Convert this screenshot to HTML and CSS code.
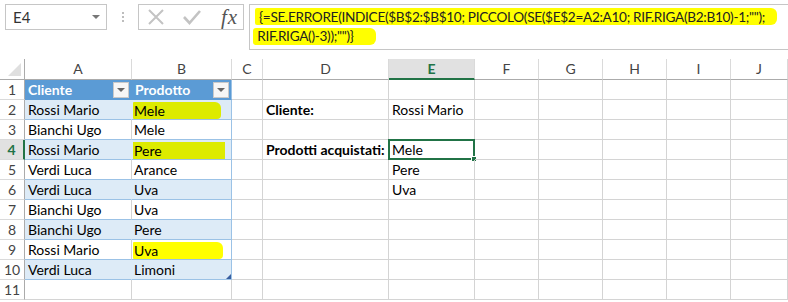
FILE: index.html
```html
<!DOCTYPE html>
<html lang="it">
<head>
<meta charset="utf-8">
<title>Excel</title>
<link rel="stylesheet" href="styles.css">
</head>
<body>
<div class="bar">
  <div class="namebox"><span class="nb-text">E4</span><span class="nb-arrow"></span></div>
  <div class="dots"><i></i><i></i><i></i></div>
  <div class="btns">
    <svg class="ico" width="18" height="18" viewBox="0 0 18 18"><path d="M2 2 L16 16 M16 2 L2 16" stroke="#c3c3c3" stroke-width="2" fill="none"/></svg>
    <svg class="ico" width="18" height="18" viewBox="0 0 18 18"><path d="M1 9 L6.5 15 L17 3" stroke="#c3c3c3" stroke-width="2.6" fill="none"/></svg>
    <span class="fx">fx</span>
  </div>
  <div class="formula">
    <div class="fl1"><span class="hl hl1">{=SE.ERRORE(INDICE($B$2:$B$10; PICCOLO(SE($E$2=A2:A10; RIF.RIGA(B2:B10)-1;"");</span></div>
    <div class="fl2"><span class="hl hl2">&nbsp;RIF.RIGA()-3));"")}</span></div>
  </div>
</div>
<div class="sheet">
  <div class="c corner"><span class="tri"></span></div>
  <div class="c ch">A</div><div class="c ch">B</div><div class="c ch">C</div><div class="c ch">D</div><div class="c ch sel">E</div><div class="c ch">F</div><div class="c ch">G</div><div class="c ch">H</div><div class="c ch">I</div><div class="c ch">J</div>

  <div class="c rh">1</div>
  <div class="c th thA">Cliente<span class="dd"></span></div><div class="c th thB">Prodotto<span class="dd"></span></div>
  <div class="c"></div><div class="c"></div><div class="c"></div><div class="c"></div><div class="c"></div><div class="c"></div><div class="c"></div><div class="c"></div>

  <div class="c rh">2</div>
  <div class="c t band tA">Rossi Mario</div><div class="c t band tB"><span class="mk mkb">Mele</span></div>
  <div class="c"></div><div class="c bold">Cliente:</div><div class="c">Rossi Mario</div><div class="c"></div><div class="c"></div><div class="c"></div><div class="c"></div><div class="c"></div>

  <div class="c rh">3</div>
  <div class="c t tA">Bianchi Ugo</div><div class="c t tB">Mele</div>
  <div class="c"></div><div class="c"></div><div class="c"></div><div class="c"></div><div class="c"></div><div class="c"></div><div class="c"></div><div class="c"></div>

  <div class="c rh rsel">4</div>
  <div class="c t band tA">Rossi Mario</div><div class="c t band tB"><span class="mk mkb mk4">Pere</span></div>
  <div class="c"></div><div class="c bold">Prodotti acquistati:</div><div class="c active">Mele<span class="afr"><span class="handle"></span></span></div><div class="c"></div><div class="c"></div><div class="c"></div><div class="c"></div><div class="c"></div>

  <div class="c rh">5</div>
  <div class="c t tA">Verdi Luca</div><div class="c t tB">Arance</div>
  <div class="c"></div><div class="c"></div><div class="c">Pere</div><div class="c"></div><div class="c"></div><div class="c"></div><div class="c"></div><div class="c"></div>

  <div class="c rh">6</div>
  <div class="c t band tA">Verdi Luca</div><div class="c t band tB">Uva</div>
  <div class="c"></div><div class="c"></div><div class="c">Uva</div><div class="c"></div><div class="c"></div><div class="c"></div><div class="c"></div><div class="c"></div>

  <div class="c rh">7</div>
  <div class="c t tA">Bianchi Ugo</div><div class="c t tB">Uva</div>
  <div class="c"></div><div class="c"></div><div class="c"></div><div class="c"></div><div class="c"></div><div class="c"></div><div class="c"></div><div class="c"></div>

  <div class="c rh">8</div>
  <div class="c t band tA">Bianchi Ugo</div><div class="c t band tB">Pere</div>
  <div class="c"></div><div class="c"></div><div class="c"></div><div class="c"></div><div class="c"></div><div class="c"></div><div class="c"></div><div class="c"></div>

  <div class="c rh">9</div>
  <div class="c t tA">Rossi Mario</div><div class="c t tB"><span class="mk mkw">Uva</span></div>
  <div class="c"></div><div class="c"></div><div class="c"></div><div class="c"></div><div class="c"></div><div class="c"></div><div class="c"></div><div class="c"></div>

  <div class="c rh">10</div>
  <div class="c t band tA last">Verdi Luca</div><div class="c t band tB last">Limoni<span class="rz"></span></div>
  <div class="c"></div><div class="c"></div><div class="c"></div><div class="c"></div><div class="c"></div><div class="c"></div><div class="c"></div><div class="c"></div>

  <div class="c rh">11</div>
  <div class="c"></div><div class="c"></div><div class="c"></div><div class="c"></div><div class="c"></div><div class="c"></div><div class="c"></div><div class="c"></div><div class="c"></div><div class="c"></div>
</div>
</body>
</html>
```

FILE: styles.css
```css
* { box-sizing: border-box; }
html, body { margin: 0; padding: 0; background: #fff; }
body {
  width: 788px;
  height: 302px;
  overflow: hidden;
  font-family: "Lato", "Liberation Sans", sans-serif;
  font-size: 14px;
  color: #000;
}

/* formula bar */
.bar {
  display: flex;
  align-items: flex-start;
  height: 59px;
  padding-top: 4px;
  padding-left: 5px;
}
.namebox {
  width: 102px;
  height: 26px;
  border: 1px solid #c6c6c6;
  display: flex;
  align-items: center;
  justify-content: space-between;
  padding: 0 6px 0 7px;
  font-size: 15px;
  color: #333;
}
.nb-arrow {
  width: 0; height: 0;
  border-left: 4px solid transparent;
  border-right: 4px solid transparent;
  border-top: 4px solid #777;
}
.dots {
  width: 31px;
  height: 26px;
  display: flex;
  flex-direction: column;
  align-items: center;
  justify-content: center;
  gap: 2px;
}
.dots i { display: block; width: 2px; height: 2px; background: #bdbdbd; }
.btns {
  width: 106px;
  height: 26px;
  border: 1px solid #c6c6c6;
  display: flex;
  align-items: center;
  padding-left: 8px;
  gap: 18px;
}
.fx {
  font-family: "Liberation Serif", "DejaVu Serif", serif;
  font-style: italic;
  font-size: 21px;
  color: #555;
  letter-spacing: 1px;
  margin-left: 2px;
}
.formula {
  flex: 1;
  height: 46px;
  margin-left: 5px;
  border: 1px solid #c6c6c6;
  border-right: none;
  padding: 3px 0 0 5px;
  font-size: 13.6px;
  letter-spacing: -0.3px;
  color: #222;
  line-height: 19px;
  white-space: nowrap;
  overflow: hidden;
}
.hl { background: #ffff00; }
.hl1 { padding: 1px 12px 0 4px; border-radius: 2px 6px 6px 2px; }
.hl2 { padding: 0 22px 1px 1px; margin-left: -2px; border-radius: 3px 6px 6px 3px; }

/* sheet */
.sheet {
  display: grid;
  grid-template-columns: 25px 107px 100px 31px 126px 86px 64px 64px 64px 64px 57px;
  grid-template-rows: 21px repeat(11, 20px);
}
.c {
  border-right: 1px solid #d4d4d4;
  border-bottom: 1px solid #d4d4d4;
  padding: 0 3px;
  line-height: 19px;
  white-space: nowrap;
  overflow: visible;
  position: relative;
}
.bold { font-weight: bold; }
.corner {
  border-right: 1px solid #ababab;
  border-bottom: 1px solid #ababab;
  display: flex;
  align-items: flex-end;
  justify-content: flex-end;
  padding: 0 3px 3px 0;
}
.tri {
  width: 0; height: 0;
  border-left: 13px solid transparent;
  border-bottom: 13px solid #dfdfdf;
}
.ch {
  text-align: center;
  color: #444;
  border-bottom: 1px solid #ababab;
  border-right: 1px solid #dadada;
  line-height: 20px;
  font-size: 14px;
}
.ch.sel {
  background: #e1e1e1;
  color: #217346;
  font-weight: bold;
  border-bottom: 2px solid #217346;
}
.rh {
  text-align: center;
  color: #444;
  border-right: 1px solid #ababab;
  border-bottom: 1px solid #dadada;
  padding: 0;
}
.rh.rsel {
  background: #e1e1e1;
  color: #217346;
  font-weight: bold;
  border-right: 2px solid #217346;
}

/* table */
.th {
  background: #5b9bd5;
  color: #fff;
  font-weight: bold;
  border-right-color: #5b9bd5;
  border-bottom-color: #5b9bd5;
}
.thB { border-right-color: #9bc2e6; }
.dd {
  position: absolute;
  right: 2px;
  top: 2px;
  width: 16px;
  height: 16px;
  background: #f6f6f6;
  border: 1px solid #c9c9c9;
}
.dd::after {
  content: "";
  position: absolute;
  left: 3px;
  top: 5px;
  border-left: 4px solid transparent;
  border-right: 4px solid transparent;
  border-top: 4px solid #666;
}
.t { border-bottom-color: #9bc2e6; }
.band { background: #ddebf7; }
.band.tA { border-right-color: #ddebf7; }
.tB { border-right-color: #9bc2e6; padding-left: 2px; }
.rz {
  position: absolute;
  right: 0;
  bottom: 0;
  width: 0; height: 0;
  border-left: 5px solid transparent;
  border-bottom: 5px solid #3a5fa0;
}
.mk {
  display: inline-block;
  padding: 0 0 0 1px;
  margin-left: -1px;
  line-height: 17px;
  margin-top: 2px;
  border-radius: 1px 6px 4px 1px;
}
.mkb { background: #ddeb00; width: 88px; }
.mk4 { width: 92px; border-radius: 0; }
.mkw { background: #ffff00; width: 90px; }

/* active cell */
.active { padding-left: 3px; }
.afr {
  position: absolute;
  left: -1px;
  top: -1px;
  right: -1px;
  bottom: -1px;
  border: 2px solid #217346;
}
.handle {
  position: absolute;
  right: -4px;
  bottom: -4px;
  width: 6px;
  height: 6px;
  background: #217346;
  border: 1px solid #fff;
}
```
